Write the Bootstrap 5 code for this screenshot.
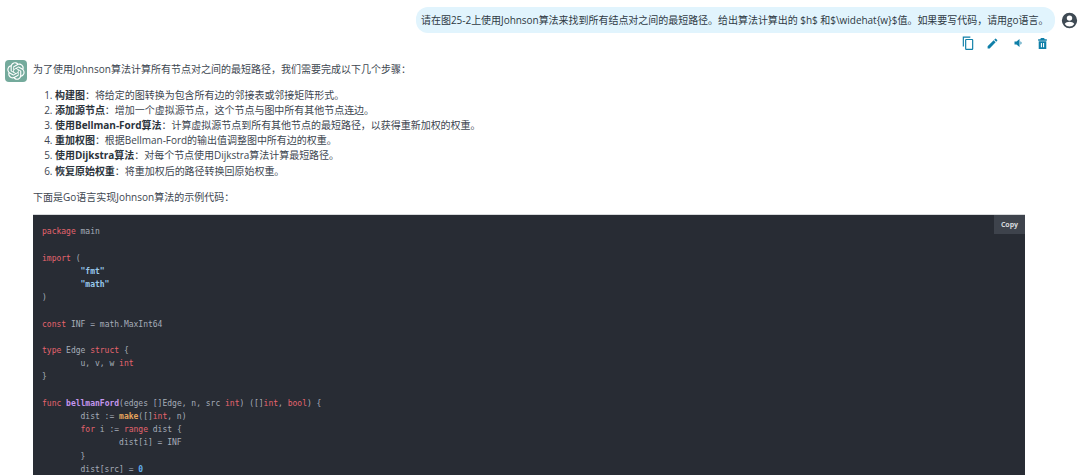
<!DOCTYPE html>
<html lang="zh">
<head>
<meta charset="utf-8">
<title>Chat</title>
<link rel="stylesheet" href="https://cdn.jsdelivr.net/npm/bootstrap@5.3.0/dist/css/bootstrap.min.css">
<style>
html,body{height:475px;overflow:hidden;background:#fff}
body{font-family:"Open Sans","Noto Sans CJK SC",sans-serif;font-size:10px;line-height:15px;color:#3d4650}
.chat-wrap{padding:7px 0 0 5px}
.user-bubble{background:#e1f4fd;border-radius:12px;height:26px;width:639px;padding:0 5px;font-size:10px;color:#2f3a44;white-space:nowrap;letter-spacing:-.035px}
.user-ava{width:25px;height:26px;overflow:hidden;padding-top:5px;padding-left:6px}
.msg-tools{padding-right:25px;height:20px}
.tool-btn{width:25px;height:20px;display:flex;align-items:center;justify-content:center}
.gpt-ava{width:22px;height:22px;background:#74aa9c;border-radius:4px;margin:5px 6px 0 0;flex:none}
.assistant{margin-top:2px;width:1020px}
.intro{margin:7px 0 10.600px;height:15px}
.steps{margin:0 0 11.600px;padding-left:22px;letter-spacing:-.03px}
.steps li{height:15.200px;line-height:15.200px;color:#3d4650}
.steps b{font-weight:700;color:#2c343c}
.lead-code{margin:0 0 8.800px;height:15px}
.code-box{position:relative;background:#282c34;width:992px;height:270px;border-top:1px solid #d8dadc;overflow:hidden;padding:10px 9px 0}
.code-box pre{margin:0;font-family:"DejaVu Sans Mono","Liberation Mono",monospace;font-size:8px;line-height:13.200px;color:#a6adb9;tab-size:8;overflow:hidden}
.copy-tag{position:absolute;top:0;right:0;width:31px;height:19px;background:#3e434c;color:#d6d8dc;font-size:7px;font-weight:700;line-height:19px;text-align:center}
.k{color:#e5646e}.s{color:#98c8ec;font-weight:700}.f{color:#c596ee;font-weight:700}.b{color:#e5a45c;font-weight:700}.n{color:#61aeee;font-weight:700}
</style>
</head>
<body>
<main class="chat-wrap">
  <section class="d-flex justify-content-end">
    <div class="user-bubble d-flex align-items-center">请在图25-2上使用Johnson算法来找到所有结点对之间的最短路径。给出算法计算出的 $h$ 和$\widehat{w}$值。如果要写代码，请用go语言。</div>
    <div class="user-ava" aria-hidden="true">
      <svg width="17" height="17" viewBox="0 0 20 20" class="d-block"><path fill="#3f4a54" fill-rule="evenodd" d="M10 1a9 9 0 1 0 0 18 9 9 0 0 0 0-18zm0 3a3.200 3.200 0 1 1 0 6.400 3.200 3.200 0 0 1 0-6.400zm0 13a7 7 0 0 1-5.600-3c.700-1.500 3.600-2.500 5.600-2.500s4.900 1 5.600 2.500A7 7 0 0 1 10 17z"/></svg>
    </div>
  </section>
  <div class="msg-tools d-flex justify-content-end">
    <span class="tool-btn"><svg width="14" height="14" viewBox="0 0 24 24" fill="none" stroke="#0f7fa8" stroke-width="2"><rect x="8" y="6" width="12" height="17" rx="1"/><path d="M4 18V2h12"/></svg></span>
    <span class="tool-btn"><svg width="13" height="13" viewBox="0 0 24 24" fill="#0f7fa8"><path d="M3 17.300V21h3.700L17.800 9.900l-3.700-3.700zM20.700 7a1 1 0 0 0 0-1.400l-2.300-2.300a1 1 0 0 0-1.400 0l-1.800 1.800 3.700 3.700z"/></svg></span>
    <span class="tool-btn"><svg width="12" height="12" viewBox="0 0 24 24" fill="#0f7fa8"><path d="M5 9v6h4l6 5V4L9 9zM17 8.500v7a4 4 0 0 0 0-7z"/></svg></span>
    <span class="tool-btn"><svg width="13" height="13" viewBox="0 0 24 24" fill="#0f7fa8"><path fill-rule="evenodd" d="M9 2h6l1 2h4v3H4V4h4zM5 8h14v14H5zm4 3v8h2v-8zm4 0v8h2v-8z"/></svg></span>
  </div>
  <section class="assistant d-flex">
    <div class="gpt-ava d-flex align-items-center justify-content-center" aria-hidden="true">
      <svg width="18" height="18" viewBox="0 0 41 41" fill="#fff"><path d="M37.5324 16.8707C37.9808 15.5241 38.1363 14.0974 37.9886 12.6859C37.8409 11.2744 37.3934 9.91076 36.676 8.68622C35.6126 6.83404 33.9882 5.3676 32.0373 4.4985C30.0864 3.62941 27.9098 3.40259 25.8215 3.85078C24.8796 2.7893 23.7219 1.94125 22.4257 1.36341C21.1295 0.785575 19.7249 0.491269 18.3058 0.500197C16.1708 0.495044 14.0893 1.16803 12.3614 2.42214C10.6335 3.67624 9.34853 5.44666 8.6917 7.47815C7.30085 7.76286 5.98686 8.3414 4.8377 9.17505C3.68854 10.0087 2.73073 11.0782 2.02839 12.312C0.956464 14.1591 0.498905 16.2988 0.721698 18.4228C0.944492 20.5467 1.83612 22.5449 3.268 24.1293C2.81966 25.4759 2.66413 26.9026 2.81182 28.3141C2.95951 29.7256 3.40701 31.0892 4.12437 32.3138C5.18791 34.1659 6.8123 35.6322 8.76321 36.5013C10.7141 37.3704 12.8907 37.5973 14.9789 37.1492C15.9208 38.2107 17.0786 39.0587 18.3747 39.6366C19.6709 40.2144 21.0755 40.5087 22.4946 40.4998C24.6307 40.5054 26.7133 39.8321 28.4418 38.5772C30.1704 37.3223 31.4556 35.5506 32.1119 33.5179C33.5027 33.2332 34.8167 32.6547 35.9659 31.821C37.115 30.9874 38.0728 29.9178 38.7752 28.684C39.8458 26.8371 40.3023 24.6979 40.0789 22.5748C39.8556 20.4517 38.9639 18.4544 37.5324 16.8707ZM22.4978 37.8849C20.7443 37.8874 19.0459 37.2733 17.6994 36.1501C17.7601 36.117 17.8666 36.0586 17.936 36.0161L25.9004 31.4156C26.1003 31.3019 26.2663 31.137 26.3813 30.9378C26.4964 30.7386 26.5563 30.5124 26.5549 30.2825V19.0542L29.9213 20.998C29.9389 21.0068 29.9541 21.0198 29.9656 21.0359C29.977 21.052 29.9842 21.0707 29.9867 21.0902V30.3889C29.9842 32.375 29.1946 34.2791 27.7909 35.6841C26.3872 37.0892 24.4838 37.8806 22.4978 37.8849ZM6.39227 31.0064C5.51397 29.4888 5.19742 27.7107 5.49804 25.9832C5.55718 26.0187 5.66048 26.0818 5.73461 26.1244L13.699 30.7248C13.8975 30.8408 14.1233 30.902 14.3532 30.902C14.583 30.902 14.8088 30.8408 15.0073 30.7248L24.731 25.1103V28.9979C24.7321 29.0177 24.7283 29.0376 24.7199 29.0556C24.7115 29.0736 24.6988 29.0893 24.6829 29.1012L16.6317 33.7497C14.9096 34.7416 12.8643 35.0097 10.9447 34.4954C9.02506 33.9811 7.38785 32.7263 6.39227 31.0064ZM4.29707 13.6194C5.17156 12.0998 6.55279 10.9364 8.19885 10.3327C8.19885 10.4013 8.19491 10.5228 8.19491 10.6071V19.808C8.19351 20.0378 8.25334 20.2638 8.36823 20.4629C8.48312 20.6619 8.64893 20.8267 8.84863 20.9404L18.5723 26.5542L15.206 28.4979C15.1894 28.5089 15.1703 28.5155 15.1505 28.5173C15.1307 28.5191 15.1107 28.516 15.0924 28.5082L7.04046 23.8557C5.32135 22.8601 4.06716 21.2235 3.55289 19.3046C3.03862 17.3858 3.30624 15.3413 4.29707 13.6194ZM31.955 20.0556L22.2312 14.4411L25.5976 12.4981C25.6142 12.4872 25.6333 12.4805 25.6531 12.4787C25.6729 12.4769 25.6928 12.4801 25.7111 12.4879L33.7631 17.1364C34.9967 17.849 36.0017 18.8982 36.6606 20.1613C37.3194 21.4244 37.6047 22.849 37.4832 24.2684C37.3617 25.6878 36.8382 27.0432 35.9743 28.1759C35.1103 29.3086 33.9415 30.1717 32.6047 30.6641C32.6047 30.5947 32.6047 30.4733 32.6047 30.3889V21.188C32.6066 20.9586 32.5474 20.7328 32.4332 20.5338C32.319 20.3348 32.154 20.1698 31.955 20.0556ZM35.3055 15.0128C35.2464 14.9765 35.1431 14.9142 35.069 14.8717L27.1045 10.2712C26.906 10.1554 26.6803 10.0943 26.4504 10.0943C26.2206 10.0943 25.9948 10.1554 25.7963 10.2712L16.0726 15.8858V11.9982C16.0715 11.9783 16.0753 11.9585 16.0837 11.9405C16.0921 11.9225 16.1048 11.9068 16.1207 11.8949L24.1719 7.25025C25.4053 6.53903 26.8158 6.19376 28.2383 6.25482C29.6608 6.31589 31.0364 6.78077 32.2044 7.59508C33.3723 8.40939 34.2842 9.53945 34.8334 10.8531C35.3826 12.1667 35.5464 13.6095 35.3055 15.0128ZM14.2424 21.9419L10.8752 19.9981C10.8576 19.9893 10.8423 19.9763 10.8309 19.9602C10.8195 19.9441 10.8122 19.9254 10.8098 19.9058V10.6071C10.8107 9.18295 11.2173 7.78848 11.9819 6.58696C12.7466 5.38544 13.8377 4.42659 15.1275 3.82264C16.4173 3.21869 17.8524 2.99464 19.2649 3.1767C20.6775 3.35876 22.0089 3.93941 23.1034 4.85067C23.0427 4.88379 22.937 4.94215 22.8668 4.98473L14.9024 9.58517C14.7025 9.69878 14.5366 9.86356 14.4215 10.0626C14.3065 10.2616 14.2466 10.4877 14.2479 10.7175L14.2424 21.9419ZM16.071 17.9991L20.4018 15.4978L24.7325 17.9975V22.9985L20.4018 25.4983L16.071 22.9985V17.9991Z"/></svg>
    </div>
    <div class="flex-grow-1">
      <p class="intro">为了使用Johnson算法计算所有节点对之间的最短路径，我们需要完成以下几个步骤：</p>
      <ol class="steps">
        <li><b>构建图</b>：将给定的图转换为包含所有边的邻接表或邻接矩阵形式。</li>
        <li><b>添加源节点</b>：增加一个虚拟源节点，这个节点与图中所有其他节点连边。</li>
        <li><b>使用Bellman-Ford算法</b>：计算虚拟源节点到所有其他节点的最短路径，以获得重新加权的权重。</li>
        <li><b>重加权图</b>：根据Bellman-Ford的输出值调整图中所有边的权重。</li>
        <li><b>使用Dijkstra算法</b>：对每个节点使用Dijkstra算法计算最短路径。</li>
        <li><b>恢复原始权重</b>：将重加权后的路径转换回原始权重。</li>
      </ol>
      <p class="lead-code">下面是Go语言实现Johnson算法的示例代码：</p>
      <div class="code-box">
        <span class="copy-tag">Copy</span>
<pre><span class="k">package</span> main

<span class="k">import</span> (
	<span class="s">"fmt"</span>
	<span class="s">"math"</span>
)

<span class="k">const</span> INF = math.MaxInt64

<span class="k">type</span> Edge <span class="k">struct</span> {
	u, v, w <span class="k">int</span>
}

<span class="k">func</span> <span class="f">bellmanFord</span>(edges []Edge, n, src <span class="k">int</span>) ([]<span class="k">int</span>, <span class="k">bool</span>) {
	dist := <span class="b">make</span>([]<span class="k">int</span>, n)
	<span class="k">for</span> i := <span class="k">range</span> dist {
		dist[i] = INF
	}
	dist[src] = <span class="n">0</span>
</pre>
      </div>
    </div>
  </section>
</main>
<script src="https://cdn.jsdelivr.net/npm/bootstrap@5.3.0/dist/js/bootstrap.bundle.min.js"></script>
</body>
</html>
